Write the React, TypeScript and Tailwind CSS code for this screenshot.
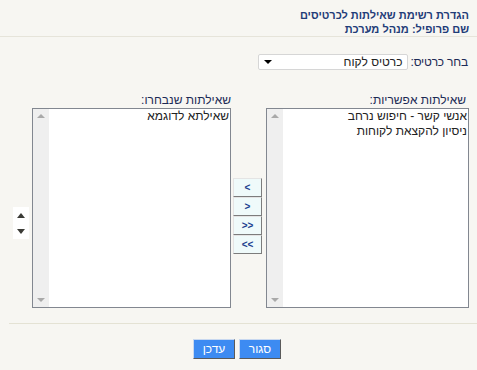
const Scrollbar = () => (
    <div className="flex h-full w-[16px] shrink-0 flex-col items-center justify-between bg-[#efefef] py-[5px]">
        <span className="h-0 w-0 border-x-[4px] border-b-[4px] border-x-transparent border-b-[#a9a9a9]" />
        <span className="h-0 w-0 border-x-[4px] border-t-[4px] border-x-transparent border-t-[#a9a9a9]" />
    </div>
);

const ListBox = ({ items }: { items: string[] }) => (
    <div className="flex h-[200px] border border-[#828790] bg-white">
        <div className="flex-1 pr-[1px] text-[12px] leading-[15px] text-[#222]">
            {items.map((item) => (
                <div key={item}>{item}</div>
            ))}
        </div>
        <Scrollbar />
    </div>
);

const MoveButton = ({ label }: { label: string }) => (
    <button className="h-[19px] w-[29px] border border-b-[#7c7c7c] border-l-[#e4e4e4] border-r-[#7c7c7c] border-t-[#e4e4e4] bg-[#effafa] text-[10px] leading-none font-bold text-[#1b3f8f]">
        {label}
    </button>
);

const ActionButton = ({ label }: { label: string }) => (
    <button className="h-[20px] w-[42px] border border-b-[#5a5a5a] border-l-[#c8d8f0] border-r-[#5a5a5a] border-t-[#c8d8f0] bg-[#3d8bf2] text-[12px] leading-none text-white">
        {label}
    </button>
);

export default function App() {
    return (
        <div
            dir="rtl"
            className="h-[370px] w-[477px] overflow-hidden bg-[#f7f6f2]"
            style={{ fontFamily: '"Liberation Sans", Arial, sans-serif' }}
        >
            {/* Header */}
            <div className="border-b border-[#e6e4da] pr-[8px] pt-[8px] text-[11px] leading-[14px] font-bold text-[#1f3c78]">
                <div>הגדרת רשימת שאילתות לכרטיסים</div>
                <div>שם פרופיל: מנהל מערכת</div>
            </div>

            {/* Card select */}
            <div className="mt-[17px] flex h-[16px] items-center gap-[3px] pr-[9px] text-[12px] text-[#1c2a55]">
                <span className="tracking-[-0.2px]">בחר כרטיס:</span>
                <div className="flex h-[16px] w-[150px] items-center justify-between rounded-[2px] border border-[#d6d6d6] bg-white pr-[4px] pl-[5px] text-[#222]">
                    <span>כרטיס לקוח</span>
                    <span className="h-0 w-0 border-x-[4px] border-t-[4px] border-x-transparent border-t-black" />
                </div>
            </div>

            {/* Lists */}
            <div className="mt-[23px] flex pr-[8px]">
                <div className="w-[203px]">
                    <div className="h-[15px] pr-[3px] text-[12px] leading-[15px] text-[#1c2a55]">שאילתות אפשריות:</div>
                    <ListBox items={['אנשי קשר - חיפוש נרחב', 'ניסיון להקצאת לקוחות']} />
                </div>
                <div className="mt-[85px] mr-[4px] flex flex-col">
                    <MoveButton label=">" />
                    <MoveButton label="<" />
                    <MoveButton label="<<" />
                    <MoveButton label=">>" />
                </div>
                <div className="mr-[2px] w-[199px]">
                    <div className="h-[15px] text-[12px] leading-[15px] text-[#1c2a55]">שאילתות שנבחרו:</div>
                    <ListBox items={['שאילתא לדוגמא']} />
                </div>
                <div className="mt-[114px] mr-[3px] flex h-[32px] w-[16px] flex-col items-center justify-around bg-white">
                    <span className="h-0 w-0 border-x-[4px] border-b-[5px] border-x-transparent border-b-[#3b3b36]" />
                    <span className="h-0 w-0 border-x-[4px] border-t-[5px] border-x-transparent border-t-[#3b3b36]" />
                </div>
            </div>

            {/* Footer */}
            <div className="mt-[15px] ml-[9px] border-t border-[#e4e2d4]" />
            <div className="mt-[15px] flex justify-center gap-[4px] pr-[3px]">
                <ActionButton label="סגור" />
                <ActionButton label="עדכן" />
            </div>
        </div>
    );
}
